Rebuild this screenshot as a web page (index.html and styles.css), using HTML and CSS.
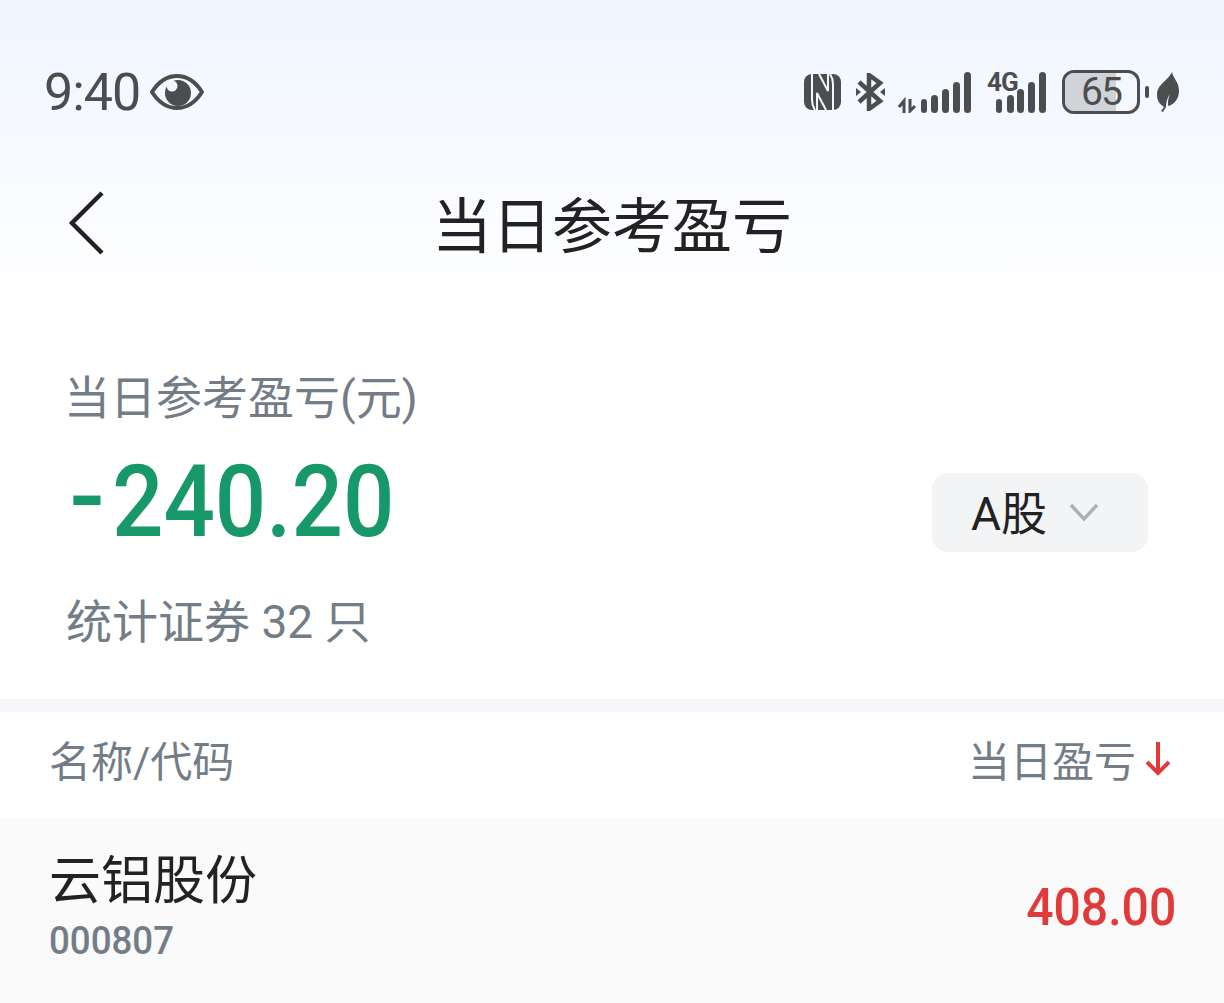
FILE: index.html
```html
<!DOCTYPE html>
<html lang="zh-CN">
<head>
    <meta charset="UTF-8">
    <meta name="viewport" content="width=device-width, initial-scale=1.0">
    <title>当日参考盈亏</title>
    <link rel="stylesheet" href="styles.css">
</head>
<body>
    <header class="top">
        <div class="status-bar">
            <div class="status-left">
                <span class="clock">9:40</span>
                <svg class="eye" width="54" height="38" viewBox="0 0 54 38">
                    <path d="M2 19C9 8 17 3 27 3s18 5 25 16c-7 11-15 16-25 16S9 30 2 19z" fill="none" stroke="#4c4d4f" stroke-width="4" stroke-linejoin="round"/>
                    <circle cx="28" cy="20" r="13" fill="#4c4d4f"/>
                    <circle cx="22" cy="13" r="5.5" fill="#f4f8fe"/>
                </svg>
            </div>
            <div class="status-right">
                <svg width="37" height="36" viewBox="0 0 37 36">
                    <rect width="37" height="36" rx="8" fill="#4c4d4f"/>
                    <path d="M8 0V26c0 4 1 7 3 10M29 36V10c0-4-1-7-3-10M13 36V19l9 17M24 0v17L15 0" fill="none" stroke="#f4f8fe" stroke-width="2"/>
                </svg>
                <svg class="bt" width="29" height="38" viewBox="0 0 29 38">
                    <path d="M3 9l21 19-11 8V2l11 8L3 29" fill="none" stroke="#4c4d4f" stroke-width="4.5"/>
                    <path d="M0 15l5 4-5 4zM29 15l-5 4 5 4z" fill="#4c4d4f"/>
                </svg>
                <svg width="73" height="41" viewBox="0 0 73 41">
                    <path d="M1 35l5-6v12M12 27v12l5-5" fill="none" stroke="#4c4d4f" stroke-width="3"/>
                    <rect x="23" y="27" width="6" height="14" rx="3" fill="#4c4d4f"/>
                    <rect x="33" y="23" width="7" height="18" rx="3.5" fill="#4c4d4f"/>
                    <rect x="44" y="17" width="7" height="24" rx="3.5" fill="#4c4d4f"/>
                    <rect x="55" y="10" width="7" height="31" rx="3.5" fill="#4c4d4f"/>
                    <rect x="66" y="0" width="7" height="41" rx="3.5" fill="#4c4d4f"/>
                </svg>
                <div class="net">
                    <span class="net-label">4G</span>
                    <svg width="60" height="41" viewBox="0 0 60 41">
                        <rect x="9" y="27" width="6" height="14" rx="3" fill="#4c4d4f"/>
                        <rect x="20" y="23" width="7" height="18" rx="3.5" fill="#4c4d4f"/>
                        <rect x="30" y="17" width="7" height="24" rx="3.5" fill="#4c4d4f"/>
                        <rect x="41" y="10" width="7" height="31" rx="3.5" fill="#4c4d4f"/>
                        <rect x="52" y="0" width="7" height="41" rx="3.5" fill="#4c4d4f"/>
                    </svg>
                </div>
                <div class="battery">
                    <div class="battery-body">
                        <div class="battery-fill"></div>
                        <span class="battery-num">65</span>
                    </div>
                    <div class="battery-cap"></div>
                </div>
                <svg width="22" height="40" viewBox="0 0 22 40">
                    <path d="M15 0c1 6 7 10 7 19 0 8-5 13-10 15-2-1-1-7 1-12-3 4-4 9-4 13l-3 5-2-1 3-4C3 32 0 29 0 23 0 12 11 9 15 0z" fill="#4c4d4f"/>
                </svg>
            </div>
        </div>
        <nav class="nav">
            <svg class="back" width="40" height="66" viewBox="0 0 40 66">
                <path d="M35 3L5 33l30 30" fill="none" stroke="#222" stroke-width="4.5"/>
            </svg>
            <h1 class="nav-title">当日参考盈亏</h1>
        </nav>
    </header>

    <section class="summary">
        <div class="summary-label">当日参考盈亏(元)</div>
        <div class="summary-main">
            <div class="total"><span class="total-minus">-</span><span class="total-num">240.20</span></div>
            <button class="market">
                <span class="market-text">A股</span>
                <svg width="30" height="20" viewBox="0 0 30 20">
                    <path d="M2 3l13 14L28 3" fill="none" stroke="#a9b1b8" stroke-width="3.5"/>
                </svg>
            </button>
        </div>
        <div class="summary-count">统计证券 32 只</div>
    </section>

    <div class="table-head">
        <span>名称/代码</span>
        <span class="sort">当日盈亏
            <svg width="28" height="36" viewBox="0 0 28 36">
                <path d="M14 2v31M3 22l11 11 11-11" fill="none" stroke="#e03a3a" stroke-width="4"/>
            </svg>
        </span>
    </div>

    <div class="stock-row">
        <div>
            <div class="stock-name">云铝股份</div>
            <div class="stock-code">000807</div>
        </div>
        <div class="stock-value">408.00</div>
    </div>
</body>
</html>
```

FILE: styles.css
```css
body {
    margin: 0;
    height: 1003px;
    overflow: hidden;
    background: #fafafa;
    font-family: Roboto, "Noto Sans CJK SC", sans-serif;
    color: #222;
}
.top {
    height: 300px;
    background: linear-gradient(#f0f5fe, #f6f9ff 45%, #ffffff);
    box-sizing: border-box;
    padding-top: 66px;
}
.status-bar {
    display: flex;
    justify-content: space-between;
    align-items: center;
    height: 52px;
    padding: 0 45px 0 44px;
}
.status-left {
    display: flex;
    align-items: center;
    gap: 10px;
}
.clock {
    font-size: 52px;
    font-weight: 400;
    color: #4c4d4f;
    letter-spacing: -1px;
}
.status-right {
    display: flex;
    align-items: center;
    gap: 15px;
}
.bt {
    margin-right: -2px;
}
.net {
    position: relative;
    width: 60px;
    height: 41px;
    margin-left: 1px;
}
.net-label {
    position: absolute;
    left: 0;
    top: -3px;
    font-size: 26px;
    font-weight: 700;
    line-height: 26px;
    letter-spacing: -1px;
    color: #4c4d4f;
}
.battery {
    display: flex;
    align-items: center;
    gap: 5px;
    margin-right: -7px;
}
.battery-body {
    position: relative;
    width: 78px;
    height: 44px;
    box-sizing: border-box;
    border: 3px solid #4c4d4f;
    border-radius: 12px;
    overflow: hidden;
    text-align: center;
}
.battery-fill {
    position: absolute;
    left: 0;
    top: 0;
    bottom: 0;
    width: 71%;
    background: #d0d4d9;
}
.battery-num {
    position: relative;
    font-size: 39px;
    line-height: 38px;
    letter-spacing: -2px;
    color: #4c4d4f;
}
.battery-cap {
    width: 4px;
    height: 12px;
    border-radius: 2px;
    background: #4c4d4f;
}
.nav {
    position: relative;
    height: 100px;
    margin-top: 58px;
    display: flex;
    align-items: center;
    justify-content: center;
}
.back {
    position: absolute;
    left: 67px;
    top: 14px;
}
.nav-title {
    margin: 3px 0 0;
    font-size: 60px;
    font-weight: 400;
    line-height: 78px;
    color: #222;
}
.summary {
    height: 399px;
    box-sizing: border-box;
    padding: 69px 76px 0 66px;
    background: #fff;
}
.summary-label, .summary-count {
    font-size: 46px;
    line-height: 58px;
    color: #737d88;
}
.summary-label {
    margin-left: -2px;
}
.summary-main {
    display: flex;
    justify-content: space-between;
    align-items: center;
    height: 130px;
    margin: 9px 0 27px;
}
.total {
    display: flex;
    align-items: center;
    font-size: 100px;
    font-weight: 500;
    color: #169868;
}
.total-minus {
    width: 46px;
    padding-left: 3px;
    box-sizing: border-box;
    transform: translateY(-5px) scaleX(1.05);
    transform-origin: left;
}
.total-num {
    display: inline-block;
    transform: scaleX(.905);
    transform-origin: left;
}
.market {
    display: flex;
    align-items: center;
    gap: 22px;
    width: 216px;
    height: 79px;
    margin-top: 22px;
    padding: 0 0 0 39px;
    border: none;
    border-radius: 16px;
    background: #f3f4f6;
    font-family: inherit;
    font-size: 46px;
    color: #222;
}
.market-text {
    margin-top: -5px;
}
.table-head {
    display: flex;
    justify-content: space-between;
    align-items: center;
    box-sizing: border-box;
    border-top: 13px solid #f5f6fa;
    height: 119px;
    padding: 0 52px 14px 49px;
    background: #fff;
    font-size: 42px;
    color: #737d88;
}
.sort {
    display: flex;
    align-items: center;
    gap: 8px;
}
.stock-row {
    display: flex;
    justify-content: space-between;
    align-items: center;
    height: 185px;
    box-sizing: border-box;
    padding: 0 48px 6px 49px;
    background: #fafafa;
}
.stock-name {
    font-size: 52px;
    line-height: 66px;
    color: #222;
}
.stock-code {
    font-size: 38px;
    font-weight: 500;
    line-height: 52px;
    color: #737d88;
    transform: scaleX(.965);
    transform-origin: left;
}
.stock-value {
    font-size: 52px;
    font-weight: 500;
    color: #e03a3a;
    transform: scaleX(.925);
    transform-origin: right;
}
```
